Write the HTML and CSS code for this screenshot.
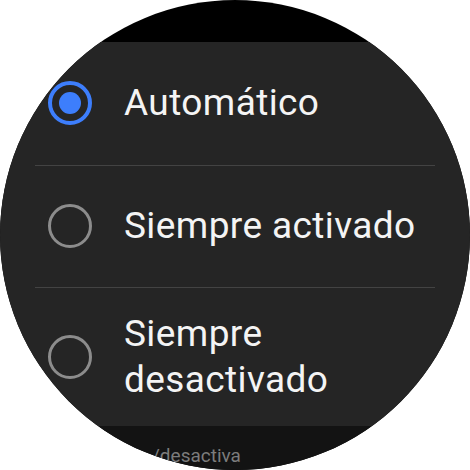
FILE: index.html
```html
<html>
<head>
<link rel="stylesheet" href="styles.css">
</head>
<body>
<div class="watch">
  <div class="watch__top"></div>
  <ul class="options">
    <li class="option option--first">
      <span class="radio radio--checked"><span class="radio__dot"></span></span>
      <span class="option__label">Automático</span>
    </li>
    <li class="option option--second">
      <span class="radio"></span>
      <span class="option__label">Siempre activado</span>
    </li>
    <li class="option option--last">
      <span class="radio"></span>
      <span class="option__label">Siempre<br>desactivado</span>
    </li>
  </ul>
  <div class="watch__footer">/desactiva</div>
</div>
</body>
</html>
```

FILE: styles.css
```css
/* reset */
* {
  padding: 0;
  margin: 0;
  box-sizing: border-box;
}

body {
  background-color: #fff;
  font-family: Roboto, "Open Sans", sans-serif;
}

.watch {
  width: 470px;
  height: 470px;
  border-radius: 50%;
  overflow: hidden;
  background-color: #000;
  display: flex;
  flex-direction: column;
}

.watch__top {
  height: 42px;
  flex-shrink: 0;
}

.options {
  list-style: none;
  background-color: #252525;
  padding: 0 35px;
}

.option {
  display: flex;
  align-items: center;
  border-bottom: 1px solid #434343;
}

.option--first {
  padding: 38px 0 39px;
}

.option--second {
  padding: 37px 0 38px;
}

.option--last {
  padding: 23px 0;
  border-bottom: 0;
}

.radio {
  width: 44px;
  height: 44px;
  margin-left: 13px;
  margin-right: 32px;
  border: 3px solid #8c8c8c;
  border-radius: 50%;
  flex-shrink: 0;
  display: flex;
  align-items: center;
  justify-content: center;
}

.radio--checked {
  border: 4px solid #3d7efc;
}

.radio__dot {
  width: 22px;
  height: 22px;
  border-radius: 50%;
  background-color: #3d7efc;
}

.option__label {
  color: #f4f4f4;
  font-size: 37px;
  line-height: 46px;
  letter-spacing: 0.4px;
}

.watch__footer {
  flex: 1;
  background-color: #131313;
  color: #7c7c7c;
  font-size: 19px;
  padding: 18px 0 0 152px;
}
```
